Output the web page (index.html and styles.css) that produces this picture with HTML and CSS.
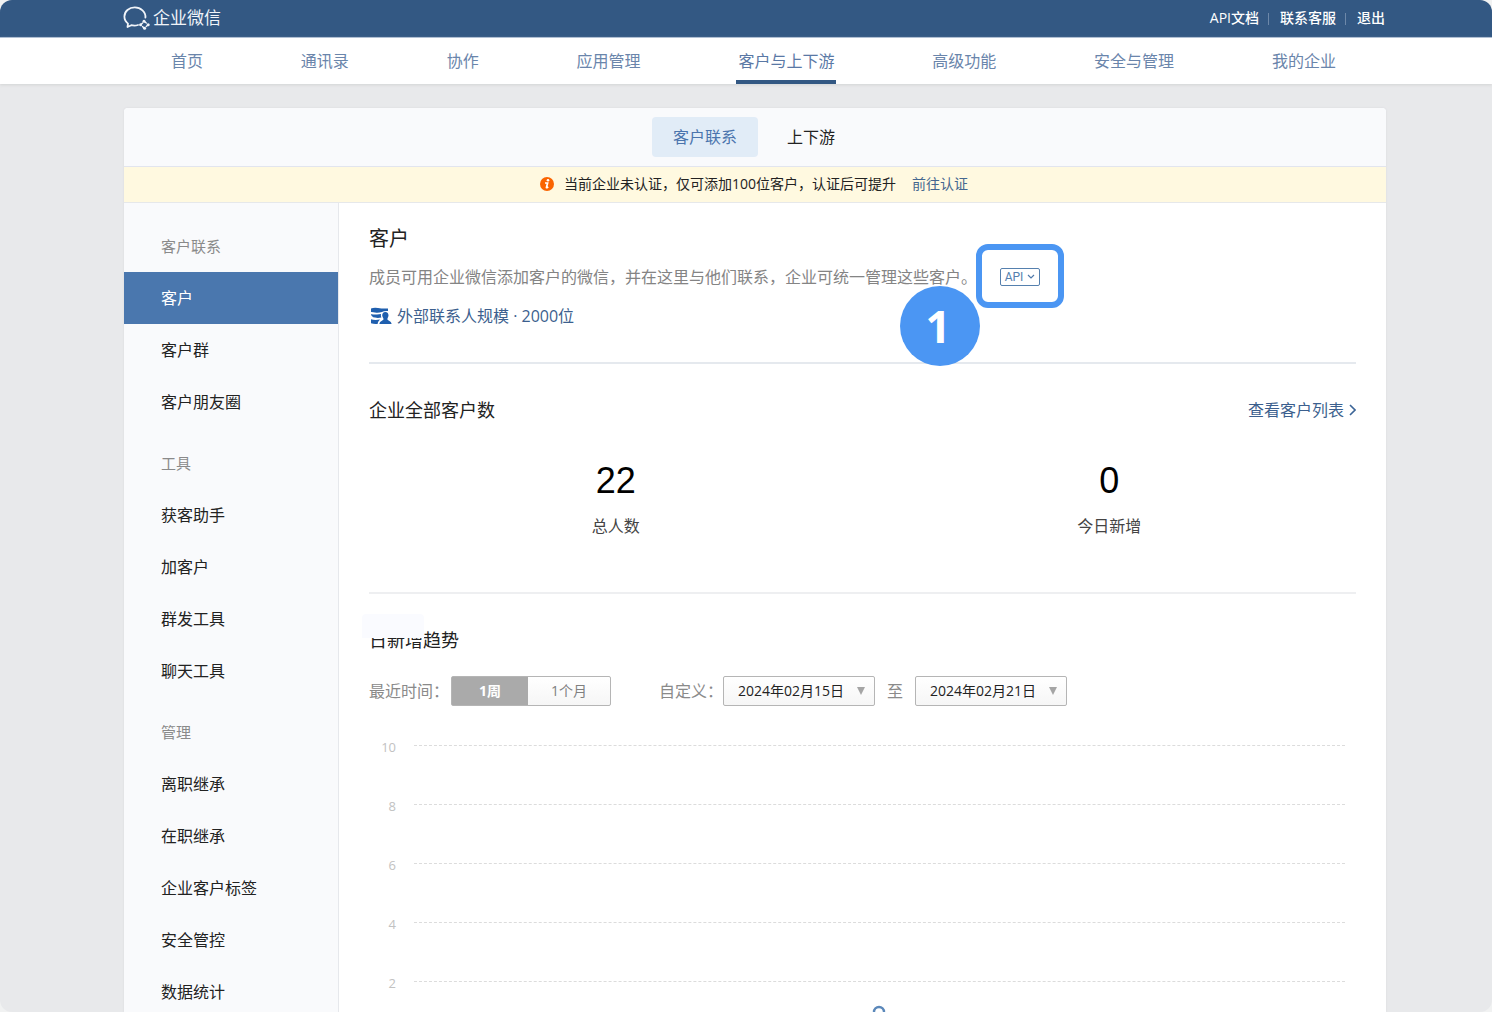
FILE: index.html
```html
<!DOCTYPE html>
<html lang="zh-CN">
<head>
<meta charset="utf-8">
<meta name="viewport" content="width=device-width, initial-scale=1">
<title>企业微信</title>
<link rel="stylesheet" href="styles.css">
</head>
<body>
<div class="page">
  <header class="topbar">
    <a class="brand" href="#">
      <svg class="brand-icon" width="28" height="24" viewBox="0 0 28 24" fill="none" aria-hidden="true">
        <path d="M22.400 11.600C23 5.800 17.600 1.400 11.800 1.400C6 1.400 1.400 5.400 1.400 10.600C1.400 13.800 2.900 16 5 17.600L4.500 21L8.300 19.200C10.600 19.800 13 19.700 15 19" stroke="#f0f4f9" stroke-width="1.800" stroke-linejoin="round" stroke-linecap="round"/>
        <g fill="#f0f4f9">
          <circle cx="21" cy="15.200" r="1.500"/><circle cx="25.200" cy="18.800" r="1.500"/>
          <circle cx="21.600" cy="22.300" r="1.500"/><circle cx="17.600" cy="18.800" r="1.500"/>
        </g>
        <path d="M21 15.200L23.300 17M25.200 18.800L23.200 20.600M21.600 22.300L19.500 20.600M17.600 18.800L19.600 17" stroke="#f0f4f9" stroke-width="1.400" stroke-linecap="round"/>
      </svg>
      <span>企业微信</span>
    </a>
    <div class="toplinks">
      <a href="#">API文档</a><a href="#">联系客服</a><a href="#">退出</a>
    </div>
  </header>

  <nav class="mainnav">
    <a href="#">首页</a>
    <a href="#">通讯录</a>
    <a href="#">协作</a>
    <a href="#">应用管理</a>
    <a href="#" class="current" aria-current="page">客户与上下游</a>
    <a href="#">高级功能</a>
    <a href="#">安全与管理</a>
    <a href="#">我的企业</a>
  </nav>

  <div class="card">
    <div class="tabs">
      <a href="#" class="tab tab-active">客户联系</a>
      <a href="#" class="tab">上下游</a>
    </div>
    <div class="notice">
      <svg width="14" height="14" viewBox="0 0 14 14" aria-hidden="true">
        <circle cx="7" cy="7" r="7" fill="#fa6400"/>
        <circle cx="8" cy="3.300" r="1.300" fill="#fff"/>
        <path d="M5 6H7.600L6.400 10.600Q6.600 11 8.300 10.100" fill="none" stroke="#fff" stroke-width="1.700"/>
      </svg>
      <span>当前企业未认证，仅可添加100位客户，认证后可提升</span>
      <a href="#">前往认证</a>
    </div>

    <div class="columns">
      <aside class="sidebar">
        <h2>客户联系</h2>
        <a href="#" class="selected">客户</a>
        <a href="#">客户群</a>
        <a href="#">客户朋友圈</a>
        <h2>工具</h2>
        <a href="#">获客助手</a>
        <a href="#">加客户</a>
        <a href="#">群发工具</a>
        <a href="#">聊天工具</a>
        <h2>管理</h2>
        <a href="#">离职继承</a>
        <a href="#">在职继承</a>
        <a href="#">企业客户标签</a>
        <a href="#">安全管控</a>
        <a href="#">数据统计</a>
      </aside>

      <main class="content">
        <section class="intro">
          <h1>客户</h1>
          <div class="desc">
            <p>成员可用企业微信添加客户的微信，并在这里与他们联系，企业可统一管理这些客户。</p>
            <div class="api">
              <button type="button" class="api-button">API
                <svg width="8" height="6" viewBox="0 0 8 6" fill="none" aria-hidden="true"><path d="M1 1L4 4L7 1" stroke="#4f79aa" stroke-width="1.200"/></svg>
              </button>
              <span class="callout-frame"></span>
              <span class="callout-number">1</span>
            </div>
          </div>
          <a href="#" class="quota">
            <svg width="22" height="18" viewBox="0 0 22 18" fill="#1f5fae" aria-hidden="true">
              <path d="M1 1.500Q4 .300 8 1T18 1.500V4Q14 3.600 12 5Q8 6 5 5.400T1 5Z"/>
              <path d="M1 7Q4 7.800 7 7.400T11 7Q10.600 9 11.400 10.500Q8 11.400 5 10.600T3 10Q1 9 1 7Z"/>
              <path d="M1 12.200Q4 13.400 10 12.600Q8 14.500 7.600 17Q4 17.400 1 16.300Z"/>
              <path d="M15.300 5C17.400 5 18.600 6.600 18.500 8.600C18.400 10.300 17.400 11 17.400 12.200C17.400 13.400 21.300 13.800 21.600 17H9.400C9.700 13.800 13.500 13.400 13.500 12.200C13.500 11 12.300 10.300 12.200 8.600C12.100 6.600 13.300 5 15.300 5Z"/>
            </svg>
            <span>外部联系人规模 · 2000位</span>
          </a>
        </section>

        <section class="totals">
          <div class="section-head">
            <h3>企业全部客户数</h3>
            <a href="#" class="more">查看客户列表
              <svg width="7" height="12" viewBox="0 0 7 12" fill="none" aria-hidden="true"><path d="M1 1L6 6L1 11" stroke="#3c6597" stroke-width="1.600"/></svg>
            </a>
          </div>
          <div class="stats">
            <div class="stat"><strong>22</strong><span>总人数</span></div>
            <div class="stat"><strong>0</strong><span>今日新增</span></div>
          </div>
        </section>

        <section class="trend">
          <h3 class="trend-title">日新增趋势</h3>
          <div class="filters">
            <span class="filter-label">最近时间：</span>
            <div class="segments">
              <button type="button" class="segment-on">1周</button>
              <button type="button">1个月</button>
            </div>
            <span class="filter-label custom">自定义：</span>
            <button type="button" class="date">2024年02月15日<span class="caret"></span></button>
            <span class="to">至</span>
            <button type="button" class="date">2024年02月21日<span class="caret"></span></button>
          </div>
          <div class="chart">
            <div class="gridline"><span>10</span></div>
            <div class="gridline"><span>8</span></div>
            <div class="gridline"><span>6</span></div>
            <div class="gridline"><span>4</span></div>
            <div class="gridline"><span>2</span></div>
            <svg class="point" width="14" height="14" viewBox="0 0 14 14" aria-hidden="true"><circle cx="7" cy="7" r="5" fill="#fff" stroke="#5b88ba" stroke-width="2.400"/></svg>
          </div>
        </section>
      </main>
    </div>
  </div>
</div>
</body>
</html>
```
FILE: styles.css
```css
* { box-sizing: border-box; }

html { background: #f1f2f2; }

body {
  margin: 0;
  font-family: "Open Sans", "Noto Sans CJK SC", sans-serif;
  font-size: 16px;
  line-height: 24px;
  color: #222;
}

h1, h2, h3, p { margin: 0; font-weight: 400; }
a { color: inherit; text-decoration: none; }
button { font: inherit; cursor: pointer; }

.page {
  height: 100vh;
  overflow: hidden;
  display: flex;
  flex-direction: column;
  border-radius: 12px;
  background: #e8e9eb;
}

/* top bar */
.topbar {
  flex: none;
  height: 38px;
  padding: 0 107px 2px 123px;
  display: flex;
  align-items: center;
  justify-content: space-between;
  background: #335883;
  border-bottom: 1px solid #a9bbd3;
  color: #fff;
}
.brand {
  display: flex;
  align-items: center;
  gap: 2px;
  font-size: 17px;
  color: #f0f4f9;
}
.toplinks { display: flex; font-size: 14px; font-weight: 500; line-height: 16px; }
.toplinks a + a {
  margin-left: 9px;
  position: relative;
  padding-left: 12px;
}
.toplinks a + a::before {
  content: "";
  position: absolute;
  left: 0;
  top: 3px;
  height: 12px;
  border-left: 1px solid #6d88a9;
}

/* main navigation */
.mainnav {
  flex: none;
  height: 46px;
  padding: 0 154px 0 169px;
  display: flex;
  justify-content: space-between;
  background: #fff;
  color: #6a85ab;
  box-shadow: 0 1px 3px #d2d4d4;
}
.mainnav a {
  padding: 11px 2px 0;
  border-bottom: 4px solid transparent;
}
.mainnav .current { border-bottom-color: #335883; color: #5a78a5; }

/* card */
.card {
  flex: 1;
  min-height: 0;
  margin: 24px 106px 0 124px;
  display: flex;
  flex-direction: column;
  border-radius: 4px 4px 0 0;
  overflow: hidden;
  background: #fff;
  box-shadow: 0 0 2px #d3d5d8;
}
.tabs {
  flex: none;
  height: 59px;
  padding-right: 2px;
  display: flex;
  align-items: center;
  justify-content: center;
  gap: 8px;
  background: #f9fafc;
  border-bottom: 1px solid #e2e5ee;
}
.tab { padding: 8px 21px; border-radius: 4px; }
.tab-active { background: #e1ecf7; color: #4a74ad; }
.notice {
  flex: none;
  height: 36px;
  padding: 0 2px 2px 0;
  display: flex;
  align-items: center;
  justify-content: center;
  font-size: 14px;
  background: #fff9e0;
  border-bottom: 1px solid #e6e8ea;
}
.notice span { margin: 0 16px 0 10px; }
.notice a { color: #45678f; }
.columns { flex: 1; min-height: 0; display: flex; }

/* sidebar */
.sidebar {
  flex: none;
  width: 215px;
  background: #f9fafc;
  border-right: 1px solid #e6e8ec;
}
.sidebar h2 {
  padding: 10px 37px 0;
  font-size: 15px;
  line-height: 51px;
  color: #8a8a8a;
}
.sidebar h2:first-child { padding-top: 18px; }
.sidebar a { display: block; padding: 0 37px; line-height: 52px; }
.sidebar .selected { background: #4a77ae; color: #fff; }

/* content */
.content { flex: 1; min-width: 0; padding: 20px 30px 0; }
.intro { padding-bottom: 34px; border-bottom: 2px solid #e5e9ee; }
.intro h1 { font-size: 20px; line-height: 32px; }
.desc {
  display: flex;
  align-items: center;
  gap: 23px;
  margin: 10px 0 15px;
  color: #848484;
}
.api { position: relative; display: flex; }
.api-button {
  width: 40px;
  height: 18px;
  padding: 0;
  display: flex;
  align-items: center;
  justify-content: center;
  gap: 4px;
  font-family: Roboto, sans-serif;
  font-size: 12px;
  line-height: 16px;
  color: #5580ae;
  background: #fff;
  border: 1px solid #5580ae;
  border-radius: 2px;
}
.callout-frame {
  position: absolute;
  left: -24px;
  top: -24px;
  width: 88px;
  height: 64px;
  border: 6px solid #4b96f3;
  border-radius: 12px;
  pointer-events: none;
}
.callout-number {
  position: absolute;
  left: -100px;
  top: 18px;
  width: 80px;
  padding-right: 4px;
  border-radius: 50%;
  background: #4b96f3;
  color: #fff;
  font-size: 44px;
  font-weight: 700;
  line-height: 80px;
  text-align: center;
}
.quota { display: flex; align-items: center; gap: 5px; padding-left: 1px; color: #3c5f8e; }

.totals { padding: 32px 0 54px; border-bottom: 2px solid #eeeff1; }
.section-head { display: flex; justify-content: space-between; align-items: center; }
h3 { font-size: 18px; line-height: 28px; }
.more { display: flex; align-items: center; gap: 5px; color: #3c5f8e; }
.stats { display: flex; margin-top: 35px; }
.stat { flex: 1; display: flex; flex-direction: column; align-items: center; gap: 11px; }
.stat strong {
  font-family: "Liberation Sans", Arial, sans-serif;
  font-size: 36px;
  font-weight: 400;
  line-height: 44px;
  color: #000;
}
.stat span { color: #444; }

/* trend */
.trend { padding-top: 32px; }
.trend-title { position: relative; }
.trend-title::before {
  content: "";
  position: absolute;
  left: -7px;
  top: -12px;
  width: 62px;
  height: 24px;
  border-radius: 4px 4px 0 0;
  background: #fafbff;
}
.filters { display: flex; align-items: center; margin-top: 22px; }
.filter-label, .to { color: #8a8a8a; }
.filter-label { margin-right: 2px; }
.custom { margin: 0 0 0 48px; }
.to { margin: 0 12px; }
.segments {
  width: 160px;
  height: 30px;
  display: flex;
  border: 1px solid #b5b5b5;
  border-radius: 2px;
  background: linear-gradient(#fff, #f6f6f6);
}
.segments button {
  flex: 1;
  padding: 0;
  border: 0;
  background: none;
  font-size: 14px;
  line-height: 28px;
  color: #808080;
}
.segments .segment-on {
  flex: 0 0 76px;
  background: #aaa;
  color: #fff;
  font-weight: 700;
}
.date {
  width: 152px;
  height: 30px;
  padding: 0 9px 0 14px;
  display: flex;
  align-items: center;
  justify-content: space-between;
  font-size: 14px;
  line-height: 28px;
  color: #222;
  border: 1px solid #b5b5b5;
  border-radius: 2px;
  background: linear-gradient(#fff, #f6f6f6);
}
.caret {
  border: 4px solid transparent;
  border-top: 8px solid #a5a5a5;
  border-bottom: 0;
}

.chart { position: relative; margin-top: 10px; padding-right: 11px; }
.gridline {
  height: 59px;
  display: flex;
  align-items: center;
  gap: 18px;
  font-size: 13px;
  color: #c2c2c2;
}
.gridline span { width: 27px; padding-top: 2px; text-align: right; }
.gridline::after { content: ""; flex: 1; border-top: 1px dashed #dcdcdc; }
.point {
  position: absolute;
  left: calc(50% + 9px);
  bottom: -8px;
}
```
